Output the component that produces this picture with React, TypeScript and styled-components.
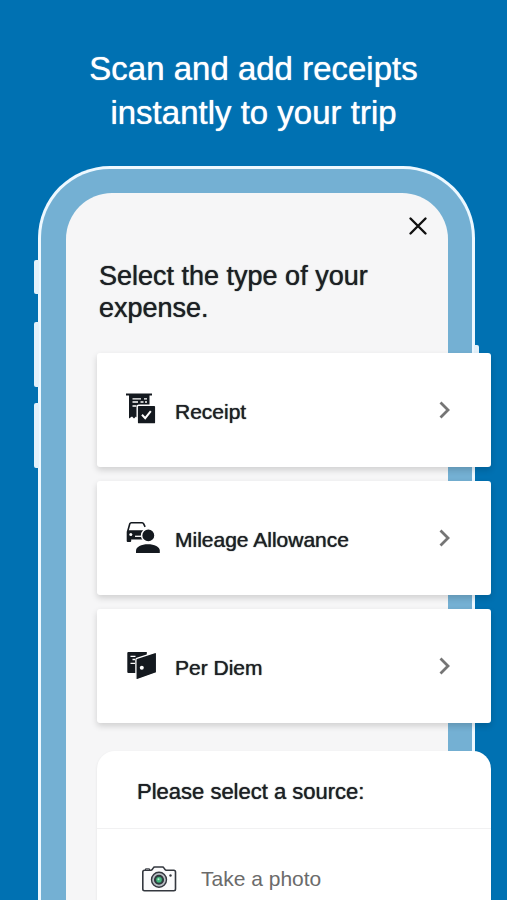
import React from "react";
import styled, { createGlobalStyle } from "styled-components";

const GlobalStyle = createGlobalStyle`
  *, *::before, *::after { box-sizing: border-box; }
  body {
    margin: 0;
    background: #0071b2;
    font-family: "Liberation Sans", Arial, sans-serif;
    color: #1c2024;
  }
`;

const Page = styled.main`
  display: flex;
  flex-direction: column;
  height: 100vh;
  overflow: hidden;
  background: #0071b2;
`;

const Headline = styled.h1`
  margin: 0;
  padding: 47px 24px 31px;
  color: #fff;
  font-size: 33px;
  font-weight: 400;
  line-height: 44px;
  text-align: center;
  text-wrap: balance;
  text-shadow: 0 0 1px currentColor;
`;

const Phone = styled.div`
  position: relative;
  flex: 1;
  display: flex;
  margin: 0 32px 0 38px;
  padding: 24px 24px 0 25px;
  border: 3px solid #edf8ff;
  border-bottom: 0;
  border-radius: 72px 72px 0 0;
  background: #74b0d3;
`;

const SideKey = styled.span<{ $side: "left" | "right"; $top: number; $length: number }>`
  position: absolute;
  ${(p) => p.$side}: -7px;
  top: ${(p) => p.$top}px;
  width: 5px;
  height: ${(p) => p.$length}px;
  border-radius: ${(p) => (p.$side === "left" ? "2px 0 0 2px" : "0 2px 2px 0")};
  background: #e3f1fa;
`;

const Screen = styled.section`
  position: relative;
  flex: 1;
  display: flex;
  flex-direction: column;
  min-width: 0;
  padding: 21px 0 0 31px;
  border-radius: 46px 46px 0 0;
  background: #f6f6f7;
`;

const CloseButton = styled.button`
  display: flex;
  align-self: flex-end;
  margin-right: 18px;
  padding: 0;
  border: 0;
  background: none;
  color: #111;
  cursor: pointer;
`;

const Question = styled.h2`
  margin: 22px 48px 29px 2px;
  font-size: 27px;
  font-weight: 400;
  line-height: 32px;
  text-shadow: 0 0 1px currentColor;
`;

const Options = styled.div`
  display: flex;
  flex-direction: column;
  gap: 14px;
  margin-right: -43px;
`;

const OptionCard = styled.button`
  display: flex;
  align-items: center;
  gap: 13px;
  height: 114px;
  padding: 0 36px 0 29px;
  border: 0;
  border-radius: 3px;
  background: #fff;
  box-shadow: 0 3px 6px rgba(0, 0, 0, 0.16);
  color: inherit;
  font: inherit;
  text-align: left;
  cursor: pointer;
`;

const OptionLabel = styled.span`
  flex: 1;
  font-size: 21px;
  line-height: 28px;
  padding-top: 4px;
  text-shadow: 0 0 1px currentColor;
`;

const Sheet = styled.section`
  flex: 1;
  margin: 28px -43px 0 0;
  border-radius: 18px 18px 0 0;
  background: #fff;
  box-shadow: 0 1px 3px rgba(0, 0, 0, 0.08);
`;

const SheetTitle = styled.h3`
  margin: 0;
  padding: 27px 40px 22px;
  border-bottom: 1px solid #f1f1f2;
  font-size: 22px;
  font-weight: 400;
  line-height: 28px;
  text-shadow: 0 0 1px currentColor;
`;

const SourceButton = styled.button`
  display: flex;
  align-items: center;
  gap: 24px;
  width: 100%;
  height: 100px;
  padding: 0 44px;
  border: 0;
  background: none;
  color: #6b6b6b;
  font: inherit;
  font-size: 21px;
  cursor: pointer;
`;

const CloseIcon = () => (
  <svg width="24" height="24" viewBox="0 0 24 24" fill="none" stroke="currentColor" strokeWidth="2.4" strokeLinecap="round" aria-hidden="true">
    <path d="M4.5 4.5l15 15M19.5 4.5l-15 15" />
  </svg>
);

const Chevron = () => (
  <svg width="20" height="20" viewBox="0 0 20 20" fill="none" stroke="#757575" strokeWidth="2.8" aria-hidden="true">
    <path d="M5.5 2.5l7.500 7.500-7.500 7.500" />
  </svg>
);

const ReceiptIcon = () => (
  <svg width="36" height="36" viewBox="0 0 36 36" aria-hidden="true">
    <path d="M0 1.5h26v2H0z" fill="#14191f" />
    <path d="M3 3h20.5v13H14v8l-2 2.4-2-1.8-2 1.8-2-1.8-3 1.8z" fill="#14191f" />
    <path d="M6.5 6.800h8.500M18 6.800h3M6.500 10h5.500M14.500 10h3M19 10h2M6.500 14h4" stroke="#fff" strokeWidth="1.3" fill="none" />
    <rect x="11.2" y="13.2" width="18.6" height="18.8" rx="1.6" fill="#14191f" stroke="#fff" strokeWidth="1.4" />
    <path d="M16 22.8l3.2 3.4 5.6-7" stroke="#fff" strokeWidth="2" fill="none" />
  </svg>
);

const MileageIcon = () => (
  <svg width="36" height="36" viewBox="0 0 36 36" aria-hidden="true">
    <path d="M1.8 11l2-7.2q.4-1.100 1.500-1.100h10.800q1.100 0 1.600 1.100l1.400 3" fill="none" stroke="#14191f" strokeWidth="1.6" />
    <path d="M1.500 10.200H18v9.300H5.200v1.400q0 1-1 1H1.700q-1 0-1-1v-9q0-1 .8-1.700z" fill="#14191f" />
    <circle cx="4.8" cy="14.6" r="1.5" fill="#fff" />
    <path d="M9 16.300h6" stroke="#fff" strokeWidth="1.3" />
    <circle cx="22.3" cy="15.4" r="6.7" fill="#14191f" stroke="#fff" strokeWidth="1.5" />
    <path d="M10 33v-2.600c0-3.600 5.400-6.200 11.900-6.200s11.900 2.600 11.900 6.200V33z" fill="#14191f" />
  </svg>
);

const PerDiemIcon = () => (
  <svg width="36" height="36" viewBox="0 0 36 36" aria-hidden="true">
    <path d="M2.300 4h18.500v21H2.300q-1 0-1-1V5q0-1 1-1z" fill="#14191f" />
    <path d="M4.500 8.300h5M6.500 11.500H9M4.500 15.300H9" stroke="#fff" strokeWidth="1.3" />
    <path d="M10.800 10.400L29.300 4.500q1.300-.3 1.300 1v18.200q0 1-1 1.400l-18.200 6.500q-1.500.4-1.500-1.100V11.500q0-.8.900-1.100z" fill="#14191f" stroke="#fff" strokeWidth="1.3" />
    <circle cx="15.8" cy="19.8" r="2" fill="#fff" />
  </svg>
);

const CameraIcon = () => (
  <svg width="36" height="28" viewBox="0 0 36 28" aria-hidden="true">
    <path d="M3.500 5.300h6.300q1 0 1.500-.9l1-1.600q.4-.8 1.400-.8h7.800q1 0 1.400.8l1 1.600q.5.900 1.500.9h7.400q1.700 0 1.700 1.700v17q0 1.700-1.700 1.700H3.500q-1.700 0-1.700-1.700V7q0-1.700 1.700-1.700z" fill="#fbfbfc" stroke="#34383f" strokeWidth="1.6" />
    <path d="M4.500 5V3.800h4V5" fill="none" stroke="#34383f" strokeWidth="1" />
    <circle cx="18" cy="14.8" r="7.5" fill="#b9bdc4" stroke="#34383f" strokeWidth="1.4" />
    <circle cx="18" cy="14.8" r="4.3" fill="#2d4f48" stroke="#30353c" strokeWidth="1.5" />
    <circle cx="18" cy="14.8" r="2.8" fill="#43b77d" />
    <circle cx="17.5" cy="14.3" r="1" fill="#b5f0d1" />
    <circle cx="29.5" cy="10.5" r="1.2" fill="#34383f" />
  </svg>
);

const options = [
  { label: "Receipt", Icon: ReceiptIcon },
  { label: "Mileage Allowance", Icon: MileageIcon },
  { label: "Per Diem", Icon: PerDiemIcon },
];

export default function App() {
  return (
    <>
      <GlobalStyle />
      <Page>
        <Headline>Scan and add receipts instantly to your trip</Headline>
        <Phone>
          <SideKey $side="left" $top={91} $length={34} />
          <SideKey $side="left" $top={153} $length={65} />
          <SideKey $side="left" $top={234} $length={65} />
          <SideKey $side="right" $top={176} $length={104} />
          <Screen>
            <CloseButton type="button" aria-label="Close">
              <CloseIcon />
            </CloseButton>
            <Question>Select the type of your expense.</Question>
            <Options>
              {options.map(({ label, Icon }) => (
                <OptionCard type="button" key={label}>
                  <Icon />
                  <OptionLabel>{label}</OptionLabel>
                  <Chevron />
                </OptionCard>
              ))}
            </Options>
            <Sheet>
              <SheetTitle>Please select a source:</SheetTitle>
              <SourceButton type="button">
                <CameraIcon />
                Take a photo
              </SourceButton>
            </Sheet>
          </Screen>
        </Phone>
      </Page>
    </>
  );
}
